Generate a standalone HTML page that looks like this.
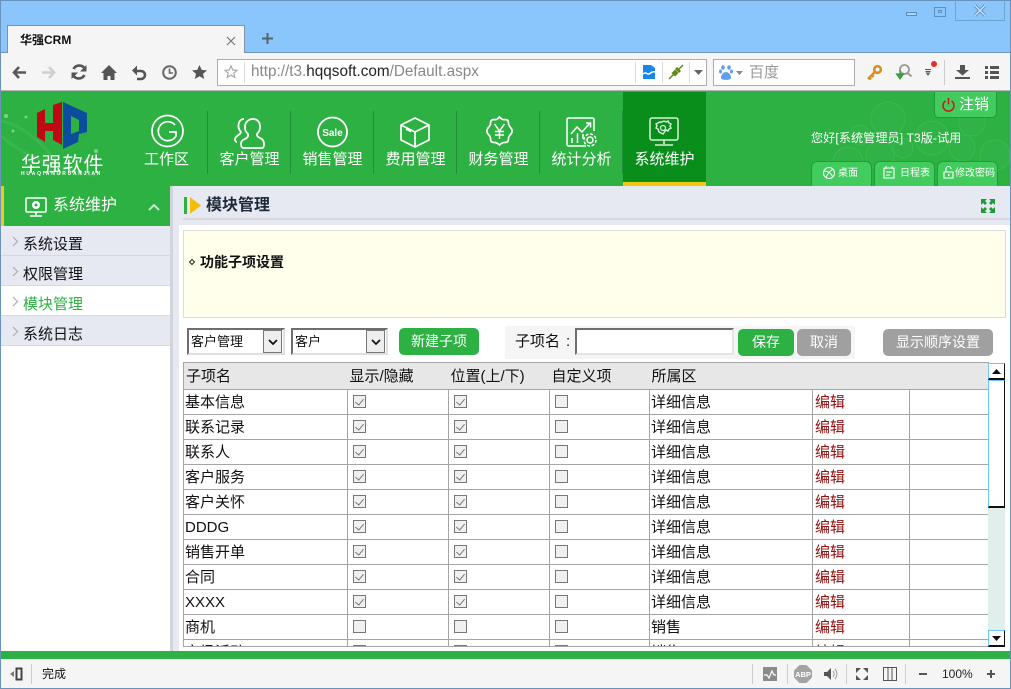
<!DOCTYPE html>
<html lang="zh"><head><meta charset="utf-8"><title>华强CRM</title>
<style>
*{box-sizing:border-box}
html,body{margin:0;padding:0;width:1011px;height:689px;overflow:hidden;background:#fff;font-family:"Liberation Sans","Noto Sans CJK SC",sans-serif;color:#111}
.a{position:absolute}
svg{position:absolute;overflow:visible}
.t{position:absolute;white-space:nowrap;line-height:1}
.nav{position:absolute;top:152px;width:83px;text-align:center;color:#fff;font-size:15px;line-height:16px}
.sep{position:absolute;top:111px;width:1px;height:63px;background:#1f8f3a}
.side{position:absolute;left:1px;width:169px;height:30px;background:#e6e9f2;border-bottom:1px solid #d6d8e2;font-size:15px;line-height:37px;padding-left:22px}
.side svg{left:11px;top:11px}
.tabbtn{position:absolute;top:161px;height:25px;background:#43cc5e;border:1px solid #1f9c3a;border-bottom:0;border-radius:6px 6px 0 0;color:#fff;font-size:10px;line-height:23px}
.sel{position:absolute;top:328px;height:27px;background:#fff;border:2px solid;border-color:#6e6e6e #e0e0e0 #e0e0e0 #6e6e6e;font-size:13px;line-height:23px;padding-left:2px}
.sel b{position:absolute;right:1px;top:0;width:19px;height:23px;background:#eee;border:1px solid #777}
.btn{position:absolute;height:27px;border-radius:5px;color:#fff;font-size:14px;text-align:center;line-height:26px}
.g{background:#2db143}.h{background:#a0a0a0}
table{position:absolute;left:183px;top:362px;width:806px;border-collapse:collapse;table-layout:fixed;font-size:15px}
td{border:1px solid #a5a5a5;height:25px;padding:0 0 0 1px;line-height:15px;white-space:nowrap;overflow:hidden}
tr.hd td{background:#e7e7e7;height:27px;padding-left:2px;border-right:0;border-left:0}
tr.hd td:first-child{border-left:1px solid #a5a5a5}
.c{display:block;width:13px;height:13px;margin:-1px 0 0 4px;background:#f0f0f0;border:1px solid #777;position:relative}
.c.k:after{content:"";position:absolute;left:3px;top:1px;width:4px;height:7px;border:solid #777;border-width:0 1.5px 1.5px 0;transform:rotate(40deg)}
td.e{color:#8f0f0f;padding-left:2px}
</style></head><body>
<!-- window frame -->
<div class="a" style="left:0;top:0;width:1011px;height:53px;background:#8ac6fb;border:1px solid #6a93bc;border-bottom:0"></div>
<div class="a" style="left:0;top:52px;width:1011px;height:1px;background:#6f95b8"></div>
<div class="a" style="left:7px;top:25px;width:238px;height:29px;background:#f5f5f5;border:1px solid #7d93a8;border-bottom:0"></div>
<div class="t" style="left:20px;top:34px;font-size:12px;font-weight:bold;color:#111">华强CRM</div>
<svg style="left:226px;top:36px" width="10" height="10"><path d="M1 1l8 8M9 1l-8 8" stroke="#777" stroke-width="1.2"/></svg>
<svg style="left:262px;top:33px" width="11" height="11"><path d="M5.500 0v11M0 5.500h11" stroke="#56636f" stroke-width="2"/></svg>
<div class="a" style="left:906px;top:12px;width:11px;height:4px;border:1px solid #5b8fbf;background:#a9d4fb"></div>
<div class="a" style="left:934px;top:7px;width:12px;height:10px;border:1px solid #5b8fbf"><div style="margin:2px 0 0 3px;width:4px;height:3px;border:1px solid #5b8fbf"></div></div>
<div class="a" style="left:955px;top:0;width:50px;height:21px;border:1px solid #6fa3d2;border-top:0"></div>
<svg style="left:974px;top:5px" width="12" height="11"><path d="M1 0.500l10 10M11 0.500l-10 10" stroke="#5d90bd" stroke-width="3.200"/><path d="M1 0.500l10 10M11 0.500l-10 10" stroke="#c5e2fb" stroke-width="1.400"/></svg>
<!-- toolbar -->
<div class="a" style="left:1px;top:53px;width:1009px;height:37px;background:#f5f5f5"></div>
<svg style="left:12px;top:66px" width="14" height="13"><path d="M7 1L2 6.500 7 12M2.500 6.500H14" fill="none" stroke="#5a5a5a" stroke-width="2.600"/></svg>
<svg style="left:42px;top:66px" width="14" height="13"><path d="M7 1l5 5.500L7 12M11.500 6.500H0" fill="none" stroke="#d0d0d0" stroke-width="2.600"/></svg>
<svg style="left:71px;top:64px" width="16" height="16"><path d="M14 5A6.500 6.500 0 0 0 2.500 5M2 11A6.500 6.500 0 0 0 13.500 11" fill="none" stroke="#555" stroke-width="2.600"/><path d="M15.500 1v6.500H9zM.5 15V8.500H7z" fill="#555"/></svg>
<svg style="left:101px;top:65px" width="16" height="15"><path d="M8 0L0 8h2.500v7h4v-4h3v4h4V8H16z" fill="#555"/></svg>
<svg style="left:132px;top:65px" width="14" height="15"><path d="M3 6h6a4 4 0 0 1 0 8H5" fill="none" stroke="#555" stroke-width="2.600"/><path d="M0 5.500L5 .5v10z" fill="#555"/></svg>
<svg style="left:162px;top:65px" width="15" height="15"><circle cx="7.500" cy="7.500" r="6.300" fill="none" stroke="#666" stroke-width="2"/><path d="M7.500 3.500v4.500h3.500" fill="none" stroke="#666" stroke-width="1.600"/></svg>
<svg style="left:192px;top:65px" width="15" height="14"><path d="M7.500 0l2.200 4.900 5.300.5-4 3.500 1.200 5.100-4.700-2.700-4.700 2.700 1.200-5.100-4-3.500 5.300-.5z" fill="#555"/></svg>
<div class="a" style="left:217px;top:59px;width:490px;height:27px;background:#fff;border:1px solid #adadad"></div>
<svg style="left:224px;top:65px" width="14" height="14"><path d="M7 1l1.800 4 4.200.4-3.200 2.800 1 4.200L7 10.200l-3.800 2.200 1-4.200L1 5.400 5.200 5z" fill="none" stroke="#aaa" stroke-width="1.200"/></svg>
<div class="a" style="left:244px;top:62px;width:1px;height:21px;background:#ddd"></div>
<div class="t" style="left:251px;top:64px;font-size:15.300px;color:#888">http://t3.<span style="color:#222">hqqsoft.com</span>/Default.aspx</div>
<div class="a" style="left:635px;top:62px;width:1px;height:21px;background:#ddd"></div>
<div class="a" style="left:662px;top:62px;width:1px;height:21px;background:#ddd"></div>
<div class="a" style="left:689px;top:62px;width:1px;height:21px;background:#ddd"></div>
<svg style="left:643px;top:65px" width="12" height="14"><path d="M0 0h8l4 3v11H0z" fill="#1a87e8"/><path d="M0 9c3-3 4 1 6 0s3-3 6-2" fill="none" stroke="#fff" stroke-width="1.500"/></svg>
<svg style="left:669px;top:65px" width="14" height="14"><path d="M0 14L5 9M9 5l5-5" stroke="#5d8a14" stroke-width="1.500"/><path d="M2.500 8l3.500-3.500 3.500 3.500-3.500 3.500zM6 4l2-2 4 4-2 2z" fill="#5d8a14"/></svg>
<svg style="left:694px;top:70px" width="9" height="5"><path d="M0 0h9L4.500 5z" fill="#666"/></svg>
<div class="a" style="left:713px;top:59px;width:142px;height:27px;background:#fff;border:1px solid #adadad"></div>
<svg style="left:719px;top:65px" width="14" height="15"><ellipse cx="4" cy="2.500" rx="1.800" ry="2.300" fill="#5f9df0"/><ellipse cx="10" cy="2.500" rx="1.800" ry="2.300" fill="#5f9df0"/><ellipse cx="1.500" cy="6.500" rx="1.500" ry="2" fill="#5f9df0"/><ellipse cx="12.500" cy="6.500" rx="1.500" ry="2" fill="#5f9df0"/><path d="M2 13c0-4 3-6 5-6s5 2 5 6c0 2.500-10 2.500-10 0z" fill="#5f9df0"/></svg>
<svg style="left:736px;top:71px" width="7" height="4"><path d="M0 0h7L3.500 4z" fill="#888"/></svg>
<div class="t" style="left:749px;top:65px;font-size:15px;color:#999">百度</div>
<svg style="left:867px;top:65px" width="15" height="15"><circle cx="10.500" cy="4.500" r="3.300" fill="none" stroke="#d98f1f" stroke-width="2.600"/><path d="M8 7L1 14M2 12.500l2 2M4.500 10l2 2" stroke="#d98f1f" stroke-width="2.600" fill="none"/></svg>
<svg style="left:896px;top:64px" width="17" height="16"><circle cx="8.500" cy="5.500" r="4.500" fill="none" stroke="#999" stroke-width="1.800"/><path d="M11.500 9l4 3.500" stroke="#999" stroke-width="2"/><path d="M4 6v5M0.500 10L4 15l3.500-5z" fill="#3f9b3f" stroke="#3f9b3f" stroke-width="1.200"/></svg>
<svg style="left:925px;top:60px" width="14" height="17"><circle cx="9" cy="4" r="3" fill="#ea2c2c"/><path d="M0 9.500h6M.5 11.500h5M1.500 13h3l-1.500 2z" stroke="#555" fill="none" stroke-width="1"/></svg>
<div class="a" style="left:944px;top:60px;width:1px;height:25px;background:#ccc"></div>
<svg style="left:955px;top:65px" width="15" height="14"><path d="M5 0h5v5h4L7.500 10.500 1 5h4zM0 12h15v2H0z" fill="#555"/></svg>
<svg style="left:985px;top:66px" width="14" height="13"><path d="M0 0h3v3H0zM5 0h9v3H5zM0 5h3v3H0zM5 5h9v3H5zM0 10h3v3H0zM5 10h9v3H5z" fill="#555"/></svg>
<div class="a" style="left:0;top:90px;width:1011px;height:1px;background:#b5b5b5"></div>
<!-- green header -->
<div class="a" style="left:1px;top:91px;width:1009px;height:95px;background:#2db143;overflow:hidden">
<svg style="left:-1px;top:0" width="1010" height="95" fill="#fff" fill-opacity=".025" stroke="#4bbf5c" stroke-opacity=".5">
<circle cx="888" cy="28" r="17"/><circle cx="860" cy="44" r="10"/><circle cx="932" cy="47" r="17"/><circle cx="972" cy="32" r="13"/><circle cx="962" cy="57" r="13"/><circle cx="995" cy="64" r="15"/><circle cx="848" cy="71" r="15"/><circle cx="880" cy="64" r="14"/><circle cx="903" cy="57" r="10"/>
<path d="M1 45C30 70 60 75 95 85M1 30C25 35 40 50 65 80" fill="none" stroke="#55c46a" stroke-width="3" stroke-opacity=".3"/>
<circle cx="6" cy="25" r="2" fill="#7fd08e" fill-opacity="1" stroke="none"/><circle cx="13" cy="40" r="1.500" fill="#7fd08e" fill-opacity="1" stroke="none"/><circle cx="26" cy="26" r="1.500" fill="#7fd08e" fill-opacity="1" stroke="none"/><circle cx="96" cy="60" r="2" fill="#7fd08e" fill-opacity="1" stroke="none"/></svg>
</div>
<!-- logo -->
<svg style="left:0;top:0" width="100" height="160"><path d="M37 113l8-4v14h8V105l9-3v43l-9-5v-9h-8v11l-8-5z" fill="#c00814"/><path d="M63 102l24 11v19l-9 10-15 7z" fill="#0d4d9e"/><path d="M71 116l8 4v11l-8 3z" fill="#2db143"/><path d="M79 134l8-2-9 10z" fill="#2db143"/></svg>
<div class="t" style="left:21px;top:155px;font-size:20px;color:#fff;letter-spacing:.8px">华强软件</div>
<div class="t" style="left:21px;top:172px;font-size:5px;color:#fff;letter-spacing:1.750px;font-weight:bold">HUAQIANGRUANJIAN</div>
<!-- nav -->
<div class="a" style="left:623px;top:92px;width:83px;height:94px;background:#098e1c"></div>
<div class="a" style="left:623px;top:182px;width:83px;height:4px;background:#efc914"></div>
<div class="sep" style="left:207px"></div><div class="sep" style="left:290px"></div><div class="sep" style="left:373px"></div><div class="sep" style="left:456px"></div><div class="sep" style="left:539px"></div><div class="sep" style="left:622px"></div>
<div class="nav" style="left:125px">工作区</div>
<div class="nav" style="left:208px">客户管理</div>
<div class="nav" style="left:291px">销售管理</div>
<div class="nav" style="left:374px">费用管理</div>
<div class="nav" style="left:457px">财务管理</div>
<div class="nav" style="left:540px">统计分析</div>
<div class="nav" style="left:623px">系统维护</div>
<svg style="left:151px;top:117px" width="33" height="28"><circle cx="16.500" cy="14" r="15.500" fill="none" stroke="#fff" stroke-width="1.700"/><path d="M24 8A9.500 9.500 0 1 0 25 19v-4h-7" fill="none" stroke="#fff" stroke-width="1.700"/></svg>
<svg style="left:234px;top:116px" width="32" height="33"><path d="M19 3c5 0 7.500 4 7 9-.3 3-2 5-3 6-.5 2 1 3 3 4 3 1 4 3 4 6 0 3-1 4-2 4H10c-2 0-3-1-3-4 0-2 1-4 4-5 2-1 3.500-2 3-5-1-1-3-3-3-6-.5-5 3-9 8-9zM10 3c-4 0-6 4-5.500 8 .3 2 1.500 4 2.500 5-.5 3-5 3-6 7 0 2 1 3 2 3" fill="none" stroke="#fff" stroke-width="1.800"/></svg>
<svg style="left:317px;top:117px" width="31" height="30"><circle cx="15.500" cy="15" r="14.500" fill="none" stroke="#fff" stroke-width="1.800"/><text x="15.500" y="19" text-anchor="middle" font-size="10" font-weight="bold" fill="#fff" font-family="Liberation Sans,sans-serif">Sale</text></svg>
<svg style="left:400px;top:117px" width="31" height="31"><path d="M15 1l14 7v15l-14 7-14-7V8zM1 8l14 7 14-7M15 15v15M6 12l5 2.500" fill="none" stroke="#fff" stroke-width="1.700" stroke-linejoin="round"/></svg>
<svg style="left:484px;top:116px" width="31" height="31"><path d="M15.500 1c2 2 3 3 5 2.500 3 0 4 1 4 4 0 2 1 3 2.500 4.500 1.500 2 1.500 4 0 6-1.500 1.500-2.500 2.500-2.500 4.500 0 3-1 4-4 4-2 0-3 .5-5 2.500-2-2-3-2.500-5-2.500-3 0-4-1-4-4 0-2-1-3-2.500-4.500-1.500-2-1.500-4 0-6C5.500 10.500 6.500 9.500 6.500 7.500c0-3 1-4 4-4 2 .5 3-.5 5-2.500z" fill="none" stroke="#fff" stroke-width="1.700"/><path d="M10.500 8l5 7 5-7M15.500 15v8M11 15.500h9M11 19h9" fill="none" stroke="#fff" stroke-width="1.500"/></svg>
<svg style="left:566px;top:117px" width="31" height="30"><path d="M20 29H2.500a1.500 1.500 0 0 1-1.500-1.500V2.500A1.500 1.500 0 0 1 2.500 1h24A1.500 1.500 0 0 1 28 2.500V14" fill="none" stroke="#fff" stroke-width="1.500"/><path d="M5 17l6-7 5 5 8-9M20 6h4.500v4.500M6 26v-5M11.500 26v-10M17 22v-5" fill="none" stroke="#fff" stroke-width="1.500"/><circle cx="24" cy="23" r="3" fill="none" stroke="#fff" stroke-width="1.500"/><circle cx="24" cy="23" r="6" fill="none" stroke="#fff" stroke-width="1.500" stroke-dasharray="3 1.700"/></svg>
<svg style="left:649px;top:117px" width="31" height="30"><rect x="1" y="1" width="28" height="22" rx="2" fill="none" stroke="#d8f0da" stroke-width="1.500"/><path d="M15 23v4M6 28h18" stroke="#d8f0da" stroke-width="1.600"/><path d="M13 5l2-1 2 1 2-1 1 2 2 1-1 2 1 2-2 1-1 2-2-1-3 4-2-1-2-1-1-3-2-1 1-2-1-2 2-1 2-1z" fill="none" stroke="#d8f0da" stroke-width="1.400"/><circle cx="14" cy="11" r="2.500" fill="none" stroke="#d8f0da" stroke-width="1.200"/></svg>
<!-- header right -->
<div class="a" style="left:934px;top:92px;width:63px;height:26px;background:#43cc5e;border:1px solid #1f9c3a;border-top:0;border-radius:0 0 5px 5px"></div>
<svg style="left:942px;top:98px" width="13" height="14"><path d="M3.500 3A5.500 5.500 0 1 0 9.500 3M6.500 0v6.500" fill="none" stroke="#c21818" stroke-width="1.500"/></svg>
<div class="t" style="left:959px;top:97px;font-size:15px;color:#fff">注销</div>
<div class="t" style="left:811px;top:132px;font-size:12.200px;color:#fff">您好[系统管理员] T3版-试用</div>
<div class="tabbtn" style="left:811px;width:61px;padding-left:26px">桌面</div>
<svg style="left:823px;top:167px" width="12" height="12"><circle cx="6" cy="6" r="5.500" fill="none" stroke="#fff" stroke-width="1.100"/><path d="M1 4c4 0 7 2 9 6M10 2C7 4 4 7 3 11" fill="none" stroke="#fff"/></svg>
<div class="tabbtn" style="left:874px;width:61px;padding-left:25px">日程表</div>
<svg style="left:883px;top:166px" width="12" height="13"><path d="M1 2h10v10H1zM3 0v3M9 0v3M3 6h6M3 9h4" fill="none" stroke="#fff" stroke-width="1.100"/></svg>
<div class="tabbtn" style="left:937px;width:61px;padding-left:17px">修改密码</div>
<svg style="left:943px;top:166px" width="11" height="13"><path d="M1 6h9v6H1zM3 6V3a2.500 2.500 0 0 1 5 0" fill="none" stroke="#fff" stroke-width="1.100"/><rect x="5" y="8" width="1.500" height="2" fill="#fff"/></svg>
<!-- sidebar -->
<div class="a" style="left:1px;top:186px;width:169px;height:40px;background:#2db143"></div>
<div class="a" style="left:1px;top:186px;width:3px;height:40px;background:#efc914"></div>
<svg style="left:25px;top:197px" width="22" height="20"><rect x="1" y="1" width="20" height="14" rx="1" fill="none" stroke="#fff" stroke-width="1.500"/><path d="M11 15v3M5 19h12" stroke="#fff" stroke-width="1.500"/><circle cx="11" cy="8" r="4" fill="#fff"/><circle cx="11" cy="8" r="1.500" fill="#2db143"/></svg>
<div class="t" style="left:53px;top:198px;font-size:16px;color:#fff">系统维护</div>
<svg style="left:148px;top:203px" width="12" height="8"><path d="M1 7l5-5 5 5" fill="none" stroke="#d7f0da" stroke-width="1.800"/></svg>
<div class="side" style="top:226px"><svg width="6" height="10"><path d="M1 0l4.500 4.500L1 9" fill="none" stroke="#aaa" stroke-width="1.100"/></svg>系统设置</div>
<div class="side" style="top:256px"><svg width="6" height="10"><path d="M1 0l4.500 4.500L1 9" fill="none" stroke="#aaa" stroke-width="1.100"/></svg>权限管理</div>
<div class="side" style="top:286px;background:#fff;color:#2db143"><svg width="6" height="10"><path d="M1 0l4.500 4.500L1 9" fill="none" stroke="#aaa" stroke-width="1.100"/></svg>模块管理</div>
<div class="side" style="top:316px"><svg width="6" height="10"><path d="M1 0l4.500 4.500L1 9" fill="none" stroke="#aaa" stroke-width="1.100"/></svg>系统日志</div>
<div class="a" style="left:170px;top:186px;width:841px;height:465px;background:#e6e9f2"></div>
<div class="a" style="left:170px;top:186px;width:3px;height:465px;background:#d2d4dc"></div>
<!-- content head -->
<div class="a" style="left:184px;top:197px;width:3px;height:17px;background:#2db143"></div>
<svg style="left:190px;top:197px" width="11" height="17"><path d="M0 0l11 8.500L0 17z" fill="#f5bd0a"/></svg>
<div class="t" style="left:206px;top:198px;font-size:16px;font-weight:bold;color:#1f2b3a">模块管理</div>
<div class="a" style="left:183px;top:218px;width:828px;height:2px;background:#d9d9de"></div>
<svg style="left:981px;top:199px" width="14" height="14"><path d="M0 0h6L4 2l2 2-2 2-2-2-2 2zM14 0H8l2 2-2 2 2 2 2-2 2 2zM0 14h6l-2-2 2-2-2-2-2 2-2-2zM14 14H8l2-2-2-2 2-2 2 2 2-2z" fill="#1f9a38"/></svg>
<div class="a" style="left:179px;top:225px;width:832px;height:426px;background:#fff"></div>
<div class="a" style="left:183px;top:230px;width:823px;height:88px;background:#ffffeb;border:1px solid #dcdcdc"></div>
<svg style="left:189px;top:259px" width="6" height="6"><path d="M3 .5L5.500 3 3 5.500.5 3z" fill="none" stroke="#222"/></svg>
<div class="t" style="left:200px;top:255px;font-size:14px;font-weight:bold;color:#111">功能子项设置</div>
<!-- controls -->
<div class="sel" style="left:187px;width:98px">客户管理<b><svg style="left:4px;top:8px" width="10" height="6"><path d="M1 1l4 4 4-4" fill="none" stroke="#111" stroke-width="1.800"/></svg></b></div>
<div class="sel" style="left:291px;width:97px">客户<b><svg style="left:4px;top:8px" width="10" height="6"><path d="M1 1l4 4 4-4" fill="none" stroke="#111" stroke-width="1.800"/></svg></b></div>
<div class="btn g" style="left:399px;top:328px;width:80px">新建子项</div>
<div class="a" style="left:505px;top:326px;width:350px;height:33px;background:#f5f5f5"></div>
<div class="t" style="left:515px;top:334px;font-size:15px;color:#111">子项名</div>
<div class="t" style="left:566px;top:334px;font-size:15px;color:#111">:</div>
<div class="a" style="left:575px;top:328px;width:159px;height:27px;background:#fff;border:2px solid;border-color:#6e6e6e #e4e4e4 #e4e4e4 #6e6e6e"></div>
<div class="btn g" style="left:738px;top:329px;width:56px">保存</div>
<div class="btn h" style="left:797px;top:329px;width:54px">取消</div>
<div class="btn h" style="left:883px;top:329px;width:110px">显示顺序设置</div>
<!-- table -->
<div class="a" style="left:183px;top:362px;width:806px;height:285px;overflow:hidden">
<table style="left:0;top:0">
<colgroup><col style="width:164px"><col style="width:101px"><col style="width:101px"><col style="width:100px"><col style="width:163px"><col style="width:97px"><col style="width:80px"></colgroup>
<tr class="hd"><td>子项名</td><td>显示/隐藏</td><td>位置(上/下)</td><td>自定义项</td><td>所属区</td><td></td><td></td></tr>
<tr><td>基本信息</td><td><span class="c k"></span></td><td><span class="c k"></span></td><td><span class="c"></span></td><td>详细信息</td><td class="e">编辑</td><td></td></tr>
<tr><td>联系记录</td><td><span class="c k"></span></td><td><span class="c k"></span></td><td><span class="c"></span></td><td>详细信息</td><td class="e">编辑</td><td></td></tr>
<tr><td>联系人</td><td><span class="c k"></span></td><td><span class="c k"></span></td><td><span class="c"></span></td><td>详细信息</td><td class="e">编辑</td><td></td></tr>
<tr><td>客户服务</td><td><span class="c k"></span></td><td><span class="c k"></span></td><td><span class="c"></span></td><td>详细信息</td><td class="e">编辑</td><td></td></tr>
<tr><td>客户关怀</td><td><span class="c k"></span></td><td><span class="c k"></span></td><td><span class="c"></span></td><td>详细信息</td><td class="e">编辑</td><td></td></tr>
<tr><td>DDDG</td><td><span class="c k"></span></td><td><span class="c k"></span></td><td><span class="c"></span></td><td>详细信息</td><td class="e">编辑</td><td></td></tr>
<tr><td>销售开单</td><td><span class="c k"></span></td><td><span class="c k"></span></td><td><span class="c"></span></td><td>详细信息</td><td class="e">编辑</td><td></td></tr>
<tr><td>合同</td><td><span class="c k"></span></td><td><span class="c k"></span></td><td><span class="c"></span></td><td>详细信息</td><td class="e">编辑</td><td></td></tr>
<tr><td>XXXX</td><td><span class="c k"></span></td><td><span class="c k"></span></td><td><span class="c"></span></td><td>详细信息</td><td class="e">编辑</td><td></td></tr>
<tr><td>商机</td><td><span class="c"></span></td><td><span class="c"></span></td><td><span class="c"></span></td><td>销售</td><td class="e">编辑</td><td></td></tr>
<tr><td>市场活动</td><td><span class="c"></span></td><td><span class="c"></span></td><td><span class="c"></span></td><td>销售</td><td class="e">编辑</td><td></td></tr>
</table></div>
<div class="a" style="left:183px;top:646px;width:806px;height:1px;background:#a5a5a5"></div>
<!-- scrollbar -->
<div class="a" style="left:988px;top:363px;width:17px;height:284px;background:#e0eeec"></div>
<div class="a" style="left:988px;top:363px;width:17px;height:17px;background:#fff;border:1px solid #6cc7fb;border-right:1px solid #111;border-bottom:2px solid #111"></div>
<svg style="left:992px;top:369px" width="9" height="5"><path d="M4.500 0L9 5H0z" fill="#111"/></svg>
<div class="a" style="left:988px;top:380px;width:17px;height:128px;background:#fff;border:1px solid #6cc7fb;border-right:1px solid #111;border-bottom:2px solid #111"></div>
<div class="a" style="left:988px;top:630px;width:17px;height:17px;background:#fff;border:1px solid #6cc7fb;border-right:1px solid #111;border-bottom:2px solid #111"></div>
<svg style="left:992px;top:636px" width="9" height="5"><path d="M0 0h9L4.500 5z" fill="#111"/></svg>
<!-- bottom -->
<div class="a" style="left:1px;top:651px;width:1009px;height:8px;background:#2db143"></div>
<div class="a" style="left:1px;top:659px;width:1009px;height:29px;background:#f5f5f5"></div>
<div class="a" style="left:0;top:688px;width:1011px;height:1px;background:#6a93bc"></div>
<div class="a" style="left:0;top:0;width:1px;height:689px;background:#6a93bc"></div>
<div class="a" style="left:1010px;top:0;width:1px;height:689px;background:#6a93bc"></div>
<svg style="left:10px;top:667px" width="13" height="14"><path d="M0 7l4-3v6z" fill="#777"/><rect x="6.500" y="1.500" width="5" height="11" fill="none" stroke="#444" stroke-width="2"/></svg>
<div class="a" style="left:31px;top:664px;width:1px;height:20px;background:#ccc"></div>
<div class="t" style="left:42px;top:668px;font-size:12px;color:#111">完成</div>
<div class="a" style="left:752px;top:664px;width:1px;height:20px;background:#ccc"></div>
<svg style="left:763px;top:667px" width="16" height="14"><rect width="14" height="14" fill="#8a8a8a"/><path d="M1 8h3l2 3 3-7 2 4h2" fill="none" stroke="#fff" stroke-width="1.200"/></svg>
<div class="a" style="left:787px;top:664px;width:1px;height:20px;background:#ccc"></div>
<svg style="left:794px;top:665px" width="18" height="18"><path d="M5.500 0h7L18 5.500v7L12.500 18h-7L0 12.500v-7z" fill="#a3a3a3"/><text x="9" y="12" text-anchor="middle" font-size="7.500" font-weight="bold" fill="#fff" font-family="Liberation Sans,sans-serif">ABP</text></svg>
<svg style="left:824px;top:667px" width="14" height="14"><path d="M0 5h3l4-4v12l-4-4H0z" fill="#555"/><path d="M9 4c1.500 2 1.500 4 0 6M11 2c2.500 3 2.500 7 0 10" fill="none" stroke="#999"/></svg>
<div class="a" style="left:846px;top:664px;width:1px;height:20px;background:#ccc"></div>
<svg style="left:856px;top:668px" width="12" height="12"><path d="M0 0h5L0 5zM12 0H7l5 5zM0 12h5L0 7zM12 12H7l5-5z" fill="#555"/></svg>
<svg style="left:883px;top:667px" width="14" height="14"><path d="M.5.500h13v13H.5zM5 .5v13M9 .5v13" fill="none" stroke="#555"/></svg>
<div class="a" style="left:905px;top:664px;width:1px;height:20px;background:#ccc"></div>
<div class="a" style="left:919px;top:673px;width:8px;height:2px;background:#555"></div>
<div class="t" style="left:942px;top:668px;font-size:12px;color:#222">100%</div>
<svg style="left:986px;top:669px" width="10" height="10"><path d="M5 1v8M1 5h8" stroke="#555" stroke-width="2"/></svg>
</body></html>
